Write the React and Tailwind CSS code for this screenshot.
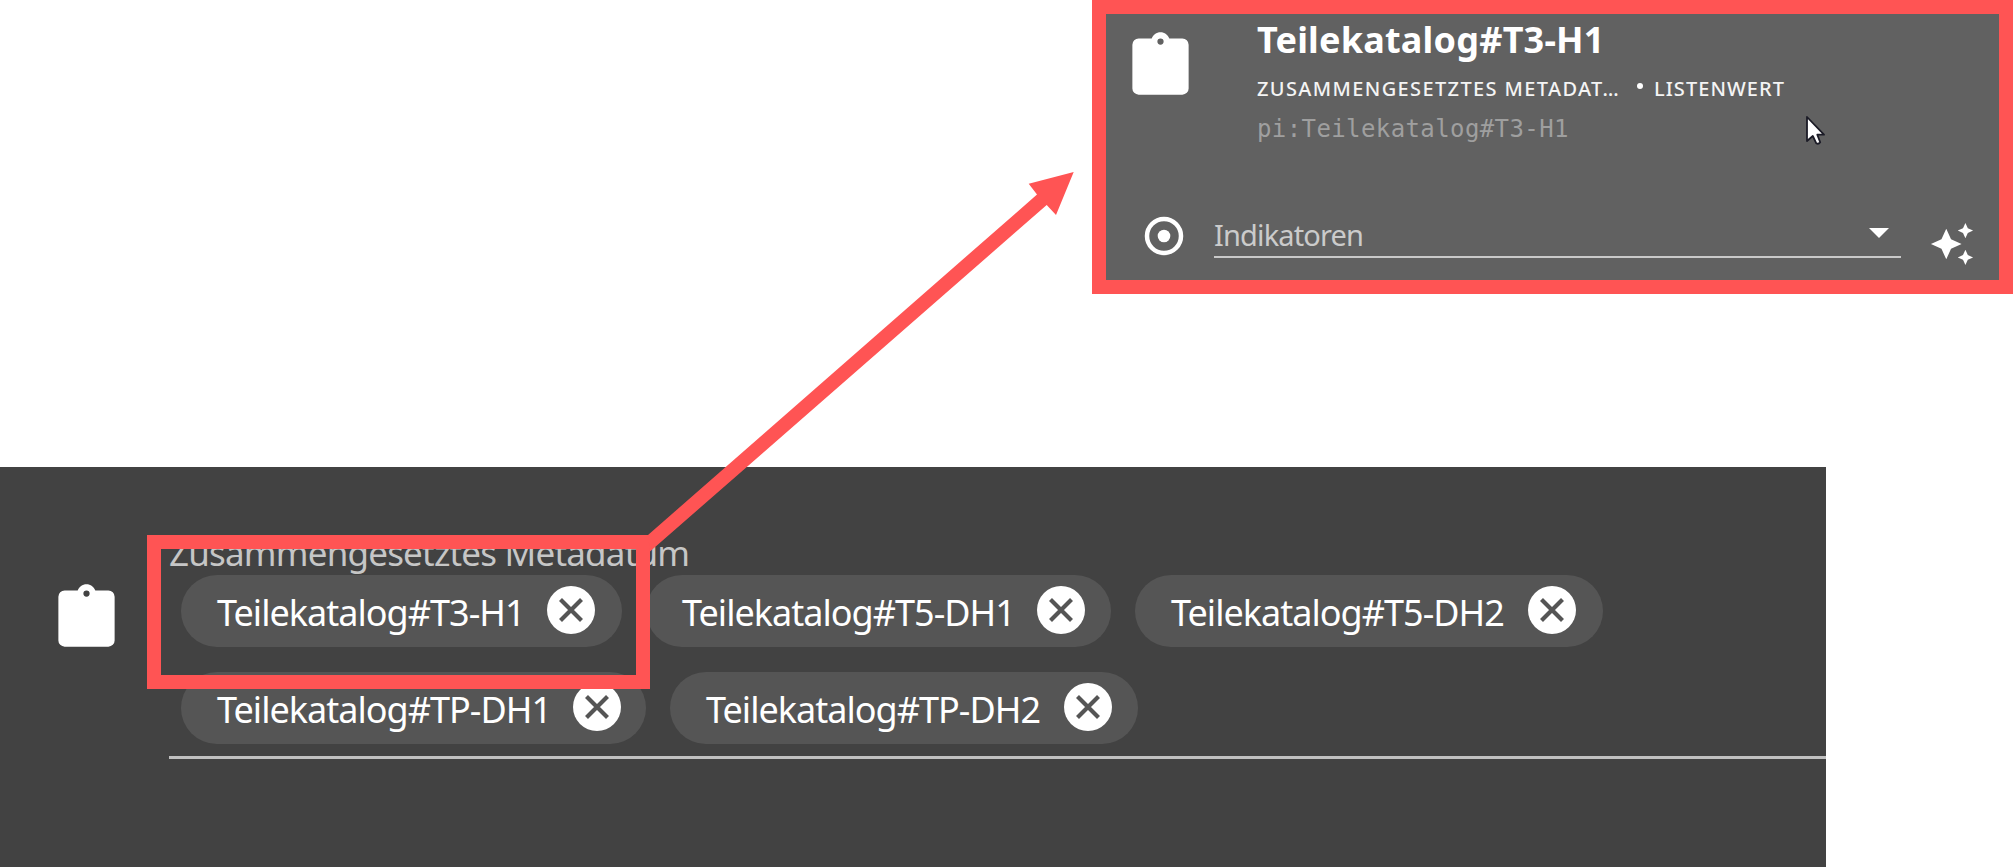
const rows = [
  [
    { label: 'Teilekatalog#T3-H1', box: 'w-[441px] pr-[27px]' },
    { label: 'Teilekatalog#T5-DH1', box: 'w-[465px] pr-[26px]' },
    { label: 'Teilekatalog#T5-DH2', box: 'w-[468px] pr-[27px]' },
  ],
  [
    { label: 'Teilekatalog#TP-DH1', box: 'w-[465px] pr-[25px]' },
    { label: 'Teilekatalog#TP-DH2', box: 'w-[468px] pr-[26px]' },
  ],
];

const ClipboardIcon = ({ className }) => (
  <svg viewBox="0 0 24 24" fill="currentColor" className={className}>
    <path d="M19,3H14.82C14.4,1.84 13.3,1 12,1C10.7,1 9.6,1.84 9.18,3H5A2,2 0 0,0 3,5V19A2,2 0 0,0 5,21H19A2,2 0 0,0 21,19V5A2,2 0 0,0 19,3M12,3A1,1 0 0,1 13,4A1,1 0 0,1 12,5A1,1 0 0,1 11,4A1,1 0 0,1 12,3Z" />
  </svg>
);

const SparklesIcon = ({ className }) => (
  <svg viewBox="0 0 24 24" fill="currentColor" className={className}>
    <path d="M19,1L17.74,3.75L15,5L17.74,6.26L19,9L20.25,6.26L23,5L20.25,3.75M9,4L6.5,9.5L1,12L6.5,14.5L9,20L11.5,14.5L17,12L11.5,9.5M19,15L17.74,17.74L15,19L17.74,20.25L19,23L20.25,20.25L23,19L20.25,17.74" />
  </svg>
);

const Chip = ({ label, box }) => (
  <div className={`${box} flex h-[72px] shrink-0 items-center justify-between rounded-full bg-[#555555] pl-[36px]`}>
    <span className="mt-[3px] whitespace-nowrap text-[36px] leading-[40px] tracking-[-0.98px] text-white">{label}</span>
    <svg viewBox="0 0 48 48" className="mb-[3px] size-[48px] shrink-0">
      <circle cx="24" cy="24" r="24" fill="#fff" />
      <path d="M13.5 13.5L34.5 34.5M34.5 13.5L13.5 34.5" stroke="#555" strokeWidth="4.2" />
    </svg>
  </div>
);

const DetailCard = () => (
  <div className="h-[294px] w-[921px] border-[14px] border-[#ff5454] bg-[#616161] text-white">
    <div className="flex h-[194px] items-start">
      <ClipboardIcon className="ml-[17px] mt-[15px] size-[75px] shrink-0" />
      <div className="ml-[59px] mt-[6px]">
        <h1 className="whitespace-nowrap text-[36px] font-bold leading-[40px] tracking-[0.2px]">Teilekatalog#T3-H1</h1>
        <div className="mt-[15px] flex h-[28px] items-center whitespace-nowrap text-[20px] font-medium leading-[28px] text-[#f4f4f4]">
          <span className="w-[380px] tracking-[1.37px]">ZUSAMMENGESETZTES METADAT…</span>
          <span className="-mt-1 mr-[11px] size-[6px] -translate-y-px rounded-full bg-white" />
          <span className="tracking-[1.05px]">LISTENWERT</span>
        </div>
        <p className="mt-[12px] whitespace-nowrap font-['DejaVu_Sans_Mono',monospace] text-[24px] leading-[28px] tracking-[0.4px] text-[#9f9f9f]">
          pi:Teilekatalog#T3-H1
        </p>
      </div>
    </div>
    <div className="flex items-start">
      <svg viewBox="0 0 40 40" className="ml-[38px] mt-[8px] size-[40px] shrink-0">
        <circle cx="20" cy="20" r="17" fill="none" stroke="#fff" strokeWidth="4.5" />
        <circle cx="20" cy="20" r="6.3" fill="#fff" />
      </svg>
      <div className="ml-[30px] mt-[7px] flex h-[43px] w-[687px] items-start justify-between border-b-2 border-[#c9c9c9]">
        <span className="text-[29px] leading-[40px] tracking-[-0.85px] text-[#cbcbcb]">Indikatoren</span>
        <svg viewBox="0 0 20 10" className="mr-[12px] mt-[13px] h-[10px] w-[20px]">
          <path d="M0 0H20L10 10Z" fill="#fff" />
        </svg>
      </div>
      <SparklesIcon className="ml-[28px] mt-[13px] size-[46px]" />
    </div>
  </div>
);

const MetadataPanel = () => (
  <div className="flex h-[400px] w-[1826px] bg-[#424242] text-white">
    <ClipboardIcon className="ml-[49px] mt-[114px] size-[75px] shrink-0" />
    <div className="ml-[45px] mt-[66px] flex-1">
      <p className="h-[42px] whitespace-nowrap text-[35px] leading-[40px] tracking-[-0.8px] text-[#c6c6c6]">
        Zusammengesetztes Metadatum
      </p>
      <div className="flex h-[184px] flex-col gap-[25px] border-b-[3px] border-[#c0c0c0] pl-[12px]">
        {rows.map((row, i) => (
          <div key={i} className="flex gap-6">
            {row.map(chip => (
              <Chip key={chip.label} {...chip} />
            ))}
          </div>
        ))}
      </div>
    </div>
  </div>
);

const App = () => {
  return (
    <div className="relative flex h-[867px] w-[2013px] flex-col justify-between overflow-hidden bg-white font-['Noto_Sans',sans-serif]">
      <div className="flex justify-end">
        <DetailCard />
      </div>
      <MetadataPanel />

      {/* highlight frame and arrow */}
      <div className="absolute left-[147px] top-[535px] h-[154px] w-[503px] border-[14px] border-[#ff5454]" />
      <svg viewBox="0 0 2013 867" className="pointer-events-none absolute inset-0 h-[867px] w-[2013px]">
        <polygon
          points="648,535 1037,194.5 1028.7,183.7 1073.7,172 1056,215 1046.7,205 650,551.5"
          fill="#ff5454"
        />
        <path
          d="M1807 117V141L1812.8 136L1816.3 143.3Q1818.5 144.6 1820.2 142.2L1817.3 134.7H1824Z"
          fill="#fff"
          stroke="#1b1b26"
          strokeWidth="1.8"
          strokeLinejoin="round"
        />
      </svg>
    </div>
  );
};

export default App;
